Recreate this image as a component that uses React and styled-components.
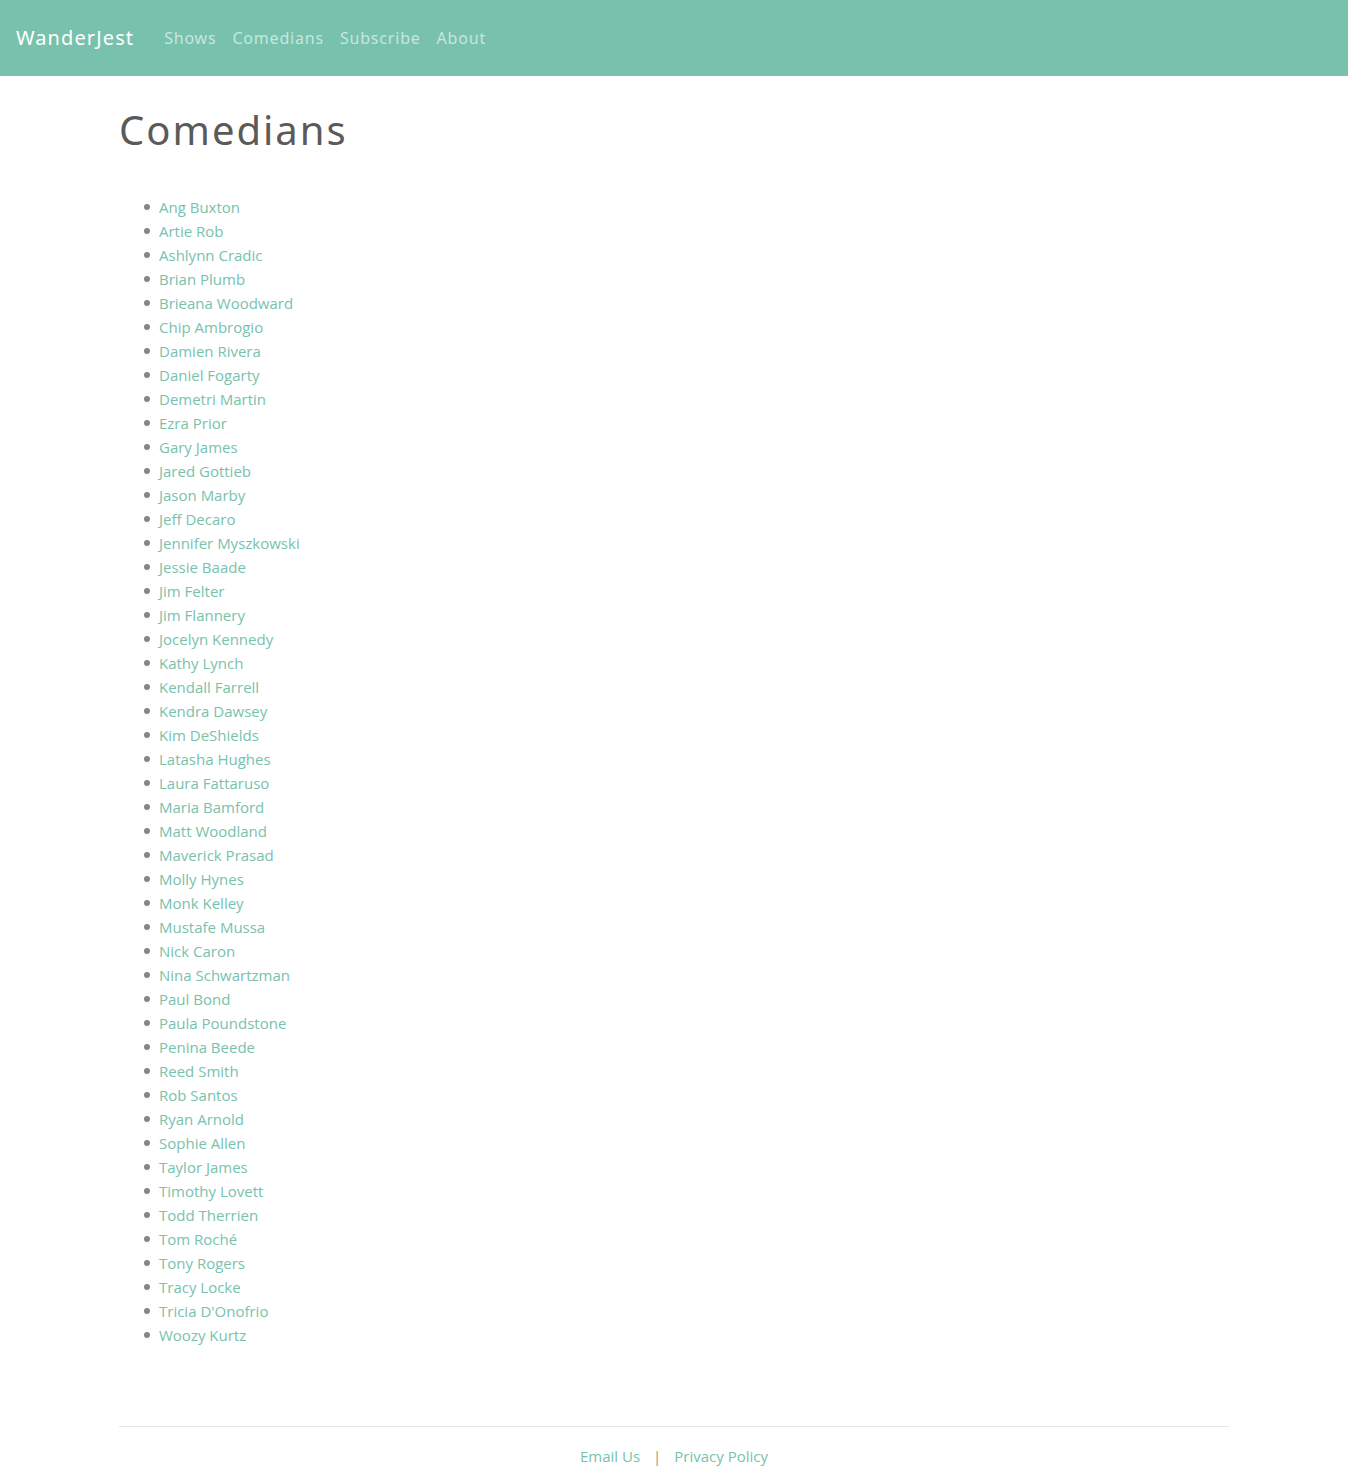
import React from 'react';
import styled, { createGlobalStyle } from 'styled-components';

const primary = '#78c2ad';

const comedians = [
  'Ang Buxton', 'Artie Rob', 'Ashlynn Cradic', 'Brian Plumb', 'Brieana Woodward',
  'Chip Ambrogio', 'Damien Rivera', 'Daniel Fogarty', 'Demetri Martin', 'Ezra Prior',
  'Gary James', 'Jared Gottieb', 'Jason Marby', 'Jeff Decaro', 'Jennifer Myszkowski',
  'Jessie Baade', 'Jim Felter', 'Jim Flannery', 'Jocelyn Kennedy', 'Kathy Lynch',
  'Kendall Farrell', 'Kendra Dawsey', 'Kim DeShields', 'Latasha Hughes', 'Laura Fattaruso',
  'Maria Bamford', 'Matt Woodland', 'Maverick Prasad', 'Molly Hynes', 'Monk Kelley',
  'Mustafe Mussa', 'Nick Caron', 'Nina Schwartzman', 'Paul Bond', 'Paula Poundstone',
  'Penina Beede', 'Reed Smith', 'Rob Santos', 'Ryan Arnold', 'Sophie Allen',
  'Taylor James', 'Timothy Lovett', 'Todd Therrien', 'Tom Roché', 'Tony Rogers',
  'Tracy Locke', "Tricia D'Onofrio", 'Woozy Kurtz'
];

const navItems = ['Shows', 'Comedians', 'Subscribe', 'About'];

const GlobalStyle = createGlobalStyle`
  * { box-sizing: border-box; }
  body {
    margin: 0;
    background: #fff;
    color: #888;
    font-family: "Open Sans", "Noto Sans", sans-serif;
    font-size: 15px;
    line-height: 24px;
  }
`;

const Navbar = styled.nav`
  height: 76px;
  background: ${primary};
  display: flex;
  align-items: center;
  padding: 0 16px;
`;

const Brand = styled.a`
  font-family: "Noto Sans", "Open Sans", sans-serif;
  font-size: 20px;
  letter-spacing: 1.1px;
  color: #fff;
  text-decoration: none;
  margin-right: 22px;
`;

const NavList = styled.div`
  display: flex;
`;

const NavLink = styled.a`
  font-family: "Noto Sans", "Open Sans", sans-serif;
  font-size: 16px;
  letter-spacing: 0.8px;
  color: rgba(255, 255, 255, 0.6);
  text-decoration: none;
  padding: 0 8px;
`;

const Container = styled.main`
  max-width: 1140px;
  margin: 0 auto;
  padding: 0 15px;
`;

const Title = styled.h1`
  font-family: "Noto Sans", "Open Sans", sans-serif;
  font-weight: 400;
  font-size: 40px;
  line-height: 48px;
  letter-spacing: 2px;
  color: #5a5a5a;
  margin: 30px 0 0;
`;

const List = styled.ul`
  list-style: none;
  margin: 41px 0 0;
  padding-left: 40px;
`;

const Item = styled.li`
  position: relative;
  line-height: 24px;

  &::before {
    content: '';
    position: absolute;
    left: -15px;
    top: 9px;
    width: 6px;
    height: 6px;
    border-radius: 50%;
    background: #858585;
  }
`;

const Link = styled.a`
  color: ${primary};
  text-decoration: none;
`;

const Footer = styled.footer`
  margin-top: 79px;
  border-top: 1px solid #e5e5e5;
  padding: 17px 0 15px;
  display: flex;
  justify-content: center;
  align-items: center;
  gap: 13px;
`;

const Sep = styled.span`
  color: #a8907c;
`;

export default function App() {
  return (
    <>
      <GlobalStyle />
      <Navbar>
        <Brand href="#">WanderJest</Brand>
        <NavList>
          {navItems.map(n => <NavLink key={n} href="#">{n}</NavLink>)}
        </NavList>
      </Navbar>
      <Container>
        <Title>Comedians</Title>
        <List>
          {comedians.map(c => (
            <Item key={c}><Link href="#">{c}</Link></Item>
          ))}
        </List>
        <Footer>
          <Link href="#">Email Us</Link>
          <Sep>|</Sep>
          <Link href="#">Privacy Policy</Link>
        </Footer>
      </Container>
    </>
  );
}
